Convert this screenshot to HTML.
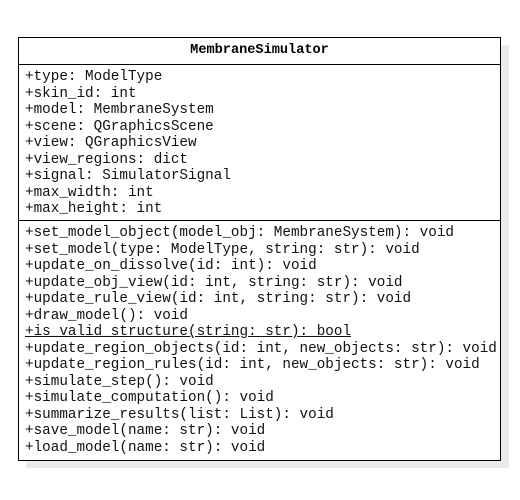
<!DOCTYPE html>
<html><head><style>
body{margin:0;width:520px;height:500px;background:#fff;font-family:"Liberation Mono",monospace;}
.shadow{position:absolute;left:26px;top:45px;width:483px;height:423px;background:#ebebeb;}
.box{position:absolute;left:18px;top:37px;width:481px;height:422px;border:1px solid #000;background:#fff;}
.t{height:26px;border-bottom:1px solid #000;text-align:center;font-weight:bold;font-size:13.6px;line-height:26px;}
.s{padding:3px 0 3px 6px;font-size:14.3px;line-height:16.5px;white-space:pre;color:#111;}
.s1{border-bottom:1px solid #000;height:148px;padding-top:4px;}
.s2{padding-top:4px;}
u{text-decoration:underline;}
</style></head><body>
<div class="shadow"></div>
<div class="box">
<div class="t">MembraneSimulator</div>
<div class="s s1">+type: ModelType
+skin_id: int
+model: MembraneSystem
+scene: QGraphicsScene
+view: QGraphicsView
+view_regions: dict
+signal: SimulatorSignal
+max_width: int
+max_height: int</div>
<div class="s s2">+set_model_object(model_obj: MembraneSystem): void
+set_model(type: ModelType, string: str): void
+update_on_dissolve(id: int): void
+update_obj_view(id: int, string: str): void
+update_rule_view(id: int, string: str): void
+draw_model(): void
<u>+is_valid_structure(string: str): bool</u>
+update_region_objects(id: int, new_objects: str): void
+update_region_rules(id: int, new_objects: str): void
+simulate_step(): void
+simulate_computation(): void
+summarize_results(list: List): void
+save_model(name: str): void
+load_model(name: str): void</div>
</div>
</body></html>
